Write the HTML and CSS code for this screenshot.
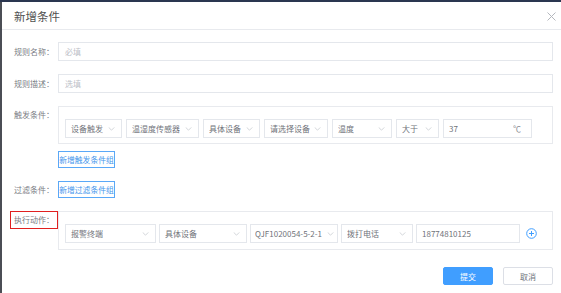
FILE: index.html
```html
<!DOCTYPE html>
<html lang="zh-CN">
<head>
<meta charset="utf-8">
<title>新增条件</title>
<link rel="stylesheet" href="styles.css">
</head>
<body>
<div class="modal">
  <div class="modal-header">
    <span class="modal-title">新增条件</span>
    <svg class="close" width="9" height="9" viewBox="0 0 9 9"><path d="M0.5 0.5L8.5 8.5M8.5 0.5L0.5 8.5" stroke="#b4b7bd" stroke-width="1" fill="none"/></svg>
  </div>
  <div class="modal-body">
    <div class="row">
      <label class="label">规则名称：</label>
      <div class="input full"><span class="ph">必填</span></div>
    </div>
    <div class="row">
      <label class="label">规则描述：</label>
      <div class="input full"><span class="ph">选填</span></div>
    </div>
    <div class="row top">
      <label class="label label-top">触发条件：</label>
      <div class="grow">
        <div class="group">
          <div class="select w57"><span>设备触发</span><svg class="chev" viewBox="0 0 8 5"><path d="M0.5 0.5L4 4L7.5 0.5" stroke="#c8cbd1" fill="none"/></svg></div>
          <div class="select w73"><span>温湿度传感器</span><svg class="chev" viewBox="0 0 8 5"><path d="M0.5 0.5L4 4L7.5 0.5" stroke="#c8cbd1" fill="none"/></svg></div>
          <div class="select w57"><span>具体设备</span><svg class="chev" viewBox="0 0 8 5"><path d="M0.5 0.5L4 4L7.5 0.5" stroke="#c8cbd1" fill="none"/></svg></div>
          <div class="select w64"><span>请选择设备</span><svg class="chev" viewBox="0 0 8 5"><path d="M0.5 0.5L4 4L7.5 0.5" stroke="#c8cbd1" fill="none"/></svg></div>
          <div class="select w60"><span>温度</span><svg class="chev" viewBox="0 0 8 5"><path d="M0.5 0.5L4 4L7.5 0.5" stroke="#c8cbd1" fill="none"/></svg></div>
          <div class="select w43"><span>大于</span><svg class="chev" viewBox="0 0 8 5"><path d="M0.5 0.5L4 4L7.5 0.5" stroke="#c8cbd1" fill="none"/></svg></div>
          <div class="select w89 unit-input"><span>37</span><span class="unit">℃</span></div>
        </div>
        <button class="link-btn add-trigger">新增触发条件组</button>
      </div>
    </div>
    <div class="row">
      <label class="label">过滤条件：</label>
      <button class="link-btn">新增过滤条件组</button>
    </div>
    <div class="row top">
      <label class="label label-top"><span class="mark">执行动作：</span></label>
      <div class="grow">
        <div class="group action">
          <div class="select w91"><span>报警终端</span><svg class="chev" viewBox="0 0 8 5"><path d="M0.5 0.5L4 4L7.5 0.5" stroke="#c8cbd1" fill="none"/></svg></div>
          <div class="select w88"><span>具体设备</span><svg class="chev" viewBox="0 0 8 5"><path d="M0.5 0.5L4 4L7.5 0.5" stroke="#c8cbd1" fill="none"/></svg></div>
          <div class="select w88"><span>QJF1020054-5-2-1</span><svg class="chev" viewBox="0 0 8 5"><path d="M0.5 0.5L4 4L7.5 0.5" stroke="#c8cbd1" fill="none"/></svg></div>
          <div class="select w72"><span>拨打电话</span><svg class="chev" viewBox="0 0 8 5"><path d="M0.5 0.5L4 4L7.5 0.5" stroke="#c8cbd1" fill="none"/></svg></div>
          <div class="select w104"><span>18774810125</span></div>
          <svg class="plus" width="11" height="11" viewBox="0 0 11 11"><circle cx="5.5" cy="5.5" r="4.8" stroke="#409eff" stroke-width="1" fill="none"/><path d="M5.5 3v5M3 5.5h5" stroke="#409eff" stroke-width="1"/></svg>
        </div>
      </div>
    </div>
  </div>
  <div class="modal-footer">
    <button class="btn primary">提交</button>
    <button class="btn">取消</button>
  </div>
</div>
</body>
</html>
```
FILE: styles.css
```css
html, body {
  margin: 0;
  padding: 0;
}
body {
  width: 561px;
  height: 293px;
  overflow: hidden;
  background: #4b4e55;
  border-top: 2px solid #2a3650;
  box-sizing: border-box;
  font-family: "Noto Sans CJK SC", "Noto Sans", sans-serif;
}
.modal {
  margin-left: 2px;
  height: 291px;
  background: #fff;
  box-sizing: border-box;
}
.modal-header {
  height: 27px;
  border-bottom: 1px solid #e8eaee;
  display: flex;
  align-items: center;
  justify-content: space-between;
  padding: 0 5px 0 12px;
}
.modal-title {
  font-size: 11.5px;
  color: #505050;
}
.close {
  display: block;
  margin-top: 1px;
}
.modal-body {
  padding: 12px 8px 0 12px;
}
.row {
  display: flex;
  align-items: center;
  margin-bottom: 13px;
}
.row.top {
  align-items: flex-start;
}
.label {
  width: 44px;
  flex: none;
  font-size: 8px;
  color: #7a7d84;
  white-space: nowrap;
}
.label-top {
  padding-top: 3px;
}
.mark {
  display: inline-block;
  margin-left: -4px;
  margin-top: -3px;
  padding: 3px;
  border: 1px solid #e02020;
  line-height: 10px;
}
.grow {
  flex: 1;
  min-width: 0;
}
.input {
  height: 19px;
  border: 1px solid #e4e7ec;
  box-sizing: border-box;
  display: flex;
  align-items: center;
  padding-left: 6px;
  font-size: 8px;
  color: #70737a;
}
.full {
  flex: 1;
}
.ph {
  color: #bcc0c7;
}
.group {
  border: 1px solid #e8eaee;
  padding: 12px 6px 5px 6px;
  display: flex;
  align-items: center;
  gap: 4px;
}
.group.action {
  gap: 3px;
  padding: 12px 6px 6px 6px;
}
.select {
  height: 19px;
  border: 1px solid #e4e7ec;
  box-sizing: border-box;
  display: flex;
  align-items: center;
  justify-content: space-between;
  padding: 0 6px 0 5px;
  font-size: 8px;
  color: #70737a;
  white-space: nowrap;
  overflow: hidden;
  flex: none;
}
.select span {
  overflow: hidden;
}
.chev {
  width: 7px;
  height: 4px;
  flex: none;
  margin-left: 2px;
}
.unit-input {
  padding-right: 10px;
}
.unit {
  color: #8a8d93;
}
.w43 { width: 43px; }
.w57 { width: 57px; }
.w60 { width: 60px; }
.w64 { width: 64px; }
.w72 { width: 72px; }
.w73 { width: 73px; }
.w88 { width: 88px; }
.w89 { width: 89px; }
.w91 { width: 91px; }
.w104 { width: 104px; }
.w88:nth-child(3) { padding-right: 3px; padding-left: 4px; }
.plus {
  display: block;
  margin-left: 3px;
  flex: none;
}
.link-btn {
  display: block;
  height: 17px;
  width: 57px;
  padding: 0;
  border: 1px solid #5aa8f7;
  background: #fff;
  color: #4496ec;
  font-family: inherit;
  font-size: 7.8px;
  box-sizing: border-box;
  white-space: nowrap;
  text-align: center;
}
.add-trigger {
  margin-top: 7px;
}
.modal-footer {
  display: flex;
  justify-content: flex-end;
  gap: 10px;
  padding: 4px 8px 0 0;
}
.btn {
  width: 50px;
  height: 18px;
  border: 1px solid #dcdfe6;
  border-radius: 2px;
  background: #fff;
  color: #70737a;
  font-family: inherit;
  font-size: 8px;
  padding: 0;
}
.btn.primary {
  background: #409eff;
  border-color: #409eff;
  color: #fff;
}
```
